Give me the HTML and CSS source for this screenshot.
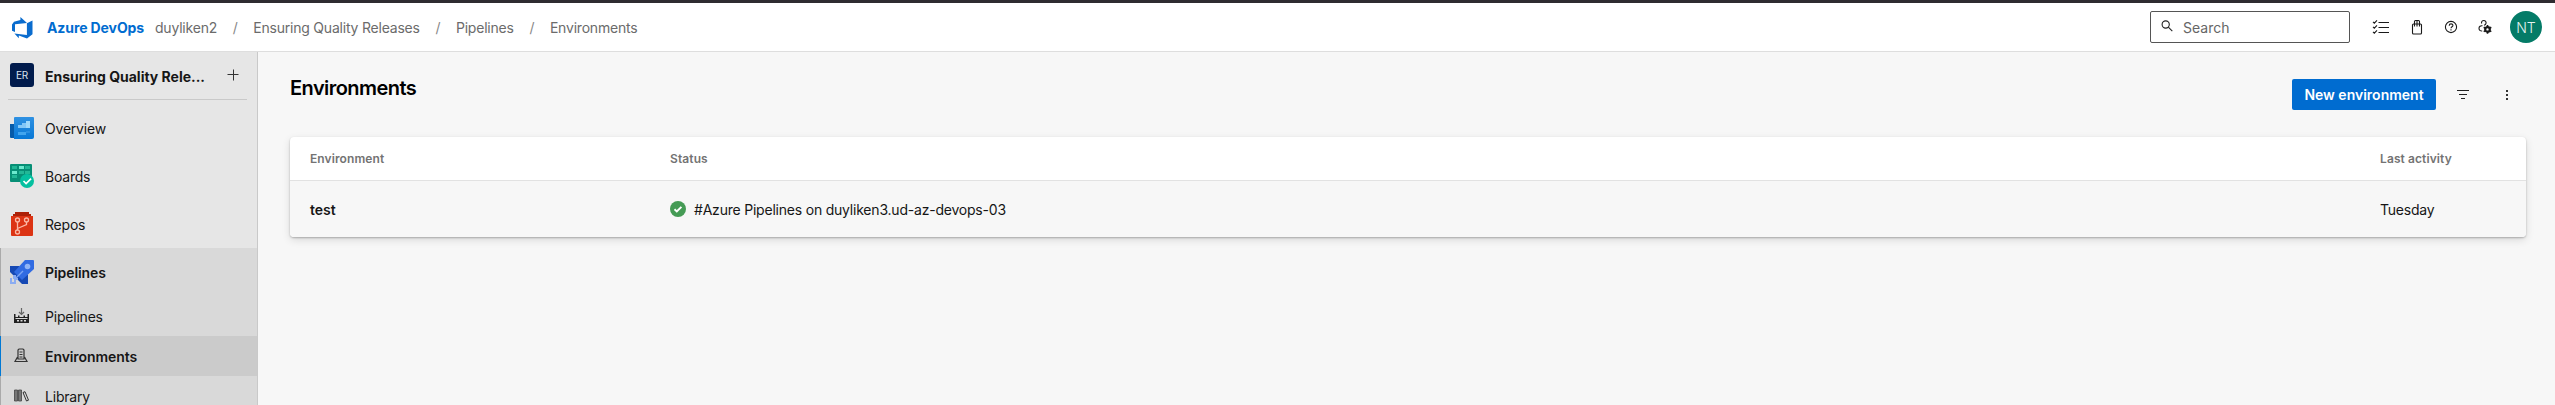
FILE: index.html
```html
<!DOCTYPE html>
<html lang="en">
<head>
<meta charset="utf-8">
<title>Environments - Pipelines</title>
<link rel="stylesheet" href="styles.css">
</head>
<body>
<div class="app">
  <header class="topbar">
    <svg class="logo" width="22" height="22" viewBox="0 0 22 22"><path fill="#0a6cce" d="M21.500 3.600v13.600l-5.500 4.300-8.200-3v2.800L3.400 16.500l12.500 1.500V6.200L21.500 3.600ZM16 6 9.400 0v2.900L3 4.800 1 7.400v6.300l3 1.300V7.200L16 6Z"/></svg>
    <a class="brand">Azure DevOps</a>
    <nav class="crumbs">
      <span>duyliken2</span><span class="sep">/</span>
      <span>Ensuring Quality Releases</span><span class="sep">/</span>
      <span>Pipelines</span><span class="sep">/</span>
      <span>Environments</span>
    </nav>
    <div class="search">
      <svg width="12" height="12" viewBox="0 0 12 12" fill="none" stroke="#222" stroke-width="1.1"><circle cx="4.700" cy="4.500" r="3.600"/><path d="m7.300 7.200 4 4"/></svg>
      <span>Search</span>
    </div>
    <div class="tools">
      <svg class="tasks" width="18" height="16" viewBox="0 0 18 16" fill="none" stroke="#1a1a1a" stroke-width="1.100"><path d="M6.500 3.500H17M6.500 8.500H17M6.500 13.500H17M1 2.800l1.300 1.300L5 1.400M1 7.800l1.300 1.300L5 6.400M1 12.800l1.300 1.300L5 11.400"/></svg>
      <svg width="16" height="16" viewBox="0 0 16 16" fill="none" stroke="#1a1a1a" stroke-width="1.100"><rect x="3.500" y="5" width="9" height="10" rx="1"/><path d="M5.500 7.500V2.500a1 1 0 0 1 1-1h3a1 1 0 0 1 1 1v5M8 1.500v6"/></svg>
      <svg width="16" height="16" viewBox="0 0 16 16" fill="none" stroke="#1a1a1a" stroke-width="1.100"><circle cx="8" cy="8" r="5.600"/><path d="M6.200 6.700c0-2.400 3.700-2.300 3.700-.2 0 1.300-1.900 1.300-1.900 2.700M8 10.200v1.200"/></svg>
      <svg width="16" height="16" viewBox="0 0 16 16" fill="none" stroke="#1a1a1a" stroke-width="1.100"><path d="M4.700 4.500C4 2.500 5.400 1.500 6.800 1.500S9.500 2.700 9 4.300C8.800 5.300 8 6 7 6.300M5.500 6.800C3.500 6.500 2 7.500 2 9.300s1.200 2.800 3.200 2.700"/><circle cx="10.500" cy="10.400" r="2.300" stroke-width="2.200"/><path stroke-width="1.600" d="M10.500 8V6M10.500 12.800v2M8.500 9.200l-1.800-1M12.500 9.200l1.800-1M8.500 11.600l-1.800 1M12.500 11.600l1.800 1"/></svg>
    </div>
    <div class="avatar">NT</div>
  </header>
  <div class="body">
    <aside class="sidebar">
      <div class="project">
        <span class="tile">ER</span>
        <span class="project-name">Ensuring Quality Rele...</span>
        <svg width="12" height="12" viewBox="0 0 12 12" stroke="#333" stroke-width="1"><path d="M6.500 .5v11M.5 5.500h11"/></svg>
      </div>
      <div class="hub">
        <svg width="24" height="24" viewBox="0 0 24 24"><defs><linearGradient id="ov" x2="0" y2="1"><stop stop-color="#2f91e2"/><stop offset="1" stop-color="#0878d6"/></linearGradient></defs><path fill="#075ba9" d="M0 8h5v14H1a1 1 0 0 1-1-1Z"/><path fill="url(#ov)" d="M5 1h18a1 1 0 0 1 1 1v19a2 2 0 0 1-2 2H4V2a1 1 0 0 1 1-1Z"/><path fill="#83c7f7" d="M8 9h4v3H8zM12 7h4v5h-4z"/><path fill="#9fd8fb" d="M16 5h4v7h-4z"/><path fill="#42a5ee" d="M8 16h8v3H8z"/><path fill="#2b8fe0" d="M16 15h4v2h-4z"/></svg>
        <span>Overview</span>
      </div>
      <div class="hub">
        <svg width="24" height="24" viewBox="0 0 24 24"><path fill="#078f76" d="M1 0h20a1 1 0 0 1 1 1v17H1a1 1 0 0 1-1-1V1a1 1 0 0 1 1-1Z"/><path fill="#22b796" d="M2 2h5v3H2zM15 2h5v3h-5zM9 7h5v3H9zM15 7h5v3h-5zM2 11h5v3H2z"/><path fill="#6ce9ce" d="M9 2h5v3H9zM2 7h5v3H2z"/><circle cx="17" cy="17" r="7" fill="#05c0a0"/><path d="m13.500 17 2.600 2.600 5-5" fill="none" stroke="#fff" stroke-width="1.700"/></svg>
        <span>Boards</span>
      </div>
      <div class="hub">
        <svg width="24" height="24" viewBox="0 0 24 24"><path fill="#ad2108" d="M5 0h14v2h2v4H3V2h2z"/><path fill="#dc3414" d="M1 4h22v19a1 1 0 0 1-1 1H2a1 1 0 0 1-1-1Z"/><g fill="none" stroke="#fbb9a6" stroke-width="1.300"><circle cx="7.500" cy="8" r="2"/><circle cx="16.500" cy="8" r="2"/><circle cx="7.500" cy="20" r="2"/><path d="M7.500 10v8M16.500 10v2.500l-9 4"/></g></svg>
        <span>Repos</span>
      </div>
      <div class="group">
        <div class="hub current">
          <svg width="24" height="24" viewBox="0 0 24 24"><path fill="#1649b4" d="M0 6h9l9 9v9h-6L0 12z"/><path fill="#316be2" d="M15 0h8a1 1 0 0 1 1 1v8L12 20l-8-8Z"/><circle cx="17.500" cy="6.500" r="2.800" fill="#91b5f6"/><path d="m6 18 7-7" stroke="#7ba4f3" stroke-width="1.500"/><path fill="#8bacf2" d="M3 15h3v3h2v2H6v4H0v-6h2v4h2v-3H3z"/></svg>
          <span>Pipelines</span>
        </div>
        <div class="sub">
          <svg width="16" height="16" viewBox="0 0 16 16"><path d="M7.500 0v6M5 4l2.500 2.500L10 4" fill="none" stroke="#666" stroke-width="1.200"/><path fill="#222" fill-rule="evenodd" d="M0 6h1.500v3H4V7.500h1.500V9h4V7.500H11V9h2.500V6H15v9H0zM1.500 10v1h12v-1zM3 12v1.500h2V12zM6.500 12v1.500h2V12zM10 12v1.500h2V12z"/></svg>
          <span>Pipelines</span>
        </div>
        <div class="sub selected">
          <svg width="16" height="16" viewBox="0 0 16 16" fill="none" stroke="#333" stroke-width="1.200"><path d="M4 11V2l1-1h4l1 1v9zM5.500 4h3M5.500 6.500h3M5.500 9h3M3.500 9 1 13.500h12L10.500 9"/></svg>
          <span>Environments</span>
        </div>
        <div class="sub">
          <svg width="16" height="16" viewBox="0 0 16 16"><path d="M.5 2h3v11h-3zM4.500 2h3v11h-3z" fill="#777" stroke="#444" stroke-width=".8"/><path d="m9 4.500 2-.8 3.500 8.500-2 .8z" fill="none" stroke="#333"/></svg>
          <span>Library</span>
        </div>
      </div>
    </aside>
    <main class="content">
      <div class="page-head">
        <h1>Environments</h1>
        <button class="primary">New environment</button>
        <svg class="filter" width="14" height="12" viewBox="0 0 14 12" stroke="#222" stroke-width="1.100"><path d="M1 1.500h12M3 5.500h8M5 9.500h4"/></svg>
        <svg class="more" width="4" height="12" viewBox="0 0 4 12" fill="#333"><path d="M1 1h2v2H1zM1 5h2v2H1zM1 9h2v2H1z"/></svg>
      </div>
      <section class="card">
        <div class="row head">
          <span>Environment</span><span>Status</span><span>Last activity</span>
        </div>
        <div class="row item">
          <strong>test</strong>
          <span class="status"><svg width="16" height="16" viewBox="0 0 16 16"><circle cx="8" cy="8" r="8" fill="#459b55"/><path d="m4.500 8.300 2.300 2.200 4.600-4.700" fill="none" stroke="#fff" stroke-width="1.900"/></svg><span>#Azure Pipelines on duyliken3.ud-az-devops-03</span></span>
          <span>Tuesday</span>
        </div>
      </section>
    </main>
  </div>
</div>
</body>
</html>
```
FILE: styles.css
```css
* { box-sizing: border-box; }
body { margin: 0; background: #f7f7f7; color: #161616; font: 14px/20px Inter, "Liberation Sans", sans-serif; letter-spacing: -.21px; white-space: nowrap; overflow: hidden; }
svg { display: block; flex: none; }
.app { display: flex; flex-direction: column; height: 405px; border-top: 3px solid #2e2c31; overflow: hidden; }
.topbar { display: flex; align-items: center; height: 49px; flex: none; background: #fff; border-bottom: 1px solid #dedede; padding: 0 13px 0 11px; }
.logo { margin-top: 1px; }
.brand { width: 109px; margin-left: 13px; color: #006cd0; font-weight: 700; letter-spacing: -.1px; padding: 2px 0 0 1px; }
.crumbs { display: flex; flex: 1; color: #6b6b6b; padding-top: 2px; }
.sep { width: 36.200px; text-align: center; color: #888; }
.search { display: flex; align-items: center; width: 200px; height: 32px; padding-left: 10px; border: 1px solid #555; border-radius: 2px; color: #666; gap: 10px; letter-spacing: 0; }
.search svg { margin-top: -2px; }
.search span { padding-top: 2px; }
.tools { display: flex; align-items: center; gap: 18px; margin: 0 17px 0 22px; }
.tasks { margin-right: 1px; }
.avatar { width: 32px; height: 32px; border-radius: 50%; background: #047b67; color: #e6f4f1; font-weight: 300; text-align: center; line-height: 33px; letter-spacing: 0; }
.body { display: flex; flex: 1; min-height: 0; }
.sidebar { width: 258px; flex: none; background: #e6e6e6; border-right: 1px solid #c9c9c9; overflow: hidden; }
.project { display: flex; align-items: center; height: 48px; margin: 0 10px 4px 8px; padding: 0 8px 0 2px; border-bottom: 1px solid #c9c9c9; }
.project svg { margin-top: -1px; }
.tile { width: 24px; height: 24px; margin-top: -1px; border-radius: 3px; background: #021c4d; color: #dde3ee; font-size: 10px; line-height: 25px; text-align: center; }
.project-name { flex: 1; margin-left: 11px; padding-top: 2px; font-weight: 700; letter-spacing: -.01px; }
.hub { display: flex; align-items: center; height: 48px; padding-left: 10px; gap: 11px; }
.hub span, .sub span { padding-top: 2px; }
.group { background: #d9d9d9; border-left: 1px solid #aaa; }
.group .hub { padding-left: 9px; }
.current, .selected { font-weight: 600; letter-spacing: -.08px; }
.sub { display: flex; align-items: center; height: 40px; padding-left: 13px; gap: 15px; }
.selected { background: #cbcbcb; border-left: 1px solid #0078d4; margin-left: -1px; }
.content { flex: 1; padding: 27px 29px 0 32px; }
.page-head { display: flex; align-items: center; height: 31px; margin-bottom: 27px; padding-right: 17px; }
h1 { flex: 1; margin: -13px 0 0; color: #000; font-size: 20px; line-height: 28px; font-weight: 600; letter-spacing: -.55px; }
.primary { width: 144px; height: 31px; padding: 1px 0 0; border: 0; border-radius: 2px; background: #006cd0; color: #fff; font: 600 14px/20px Inter, sans-serif; letter-spacing: 0; }
.filter { margin-left: 20px; }
.more { margin-left: 35px; }
.card { background: #fff; border-radius: 4px; overflow: hidden; box-shadow: 0 1px 2px rgba(0,0,0,.25), 0 3px 8px rgba(0,0,0,.12); }
.row { display: grid; grid-template-columns: 360px 1710px 1fr; align-items: center; padding-left: 20px; }
.head { height: 44px; border-bottom: 1px solid #e2e2e2; color: #737373; font-size: 12px; font-weight: 600; letter-spacing: .1px; }
.item { height: 56px; background: #f7f7f7; padding-top: 2px; }
strong { font-weight: 600; letter-spacing: 0; }
.status { display: flex; align-items: center; gap: 8px; }
.status svg { margin-top: -2px; }
```
